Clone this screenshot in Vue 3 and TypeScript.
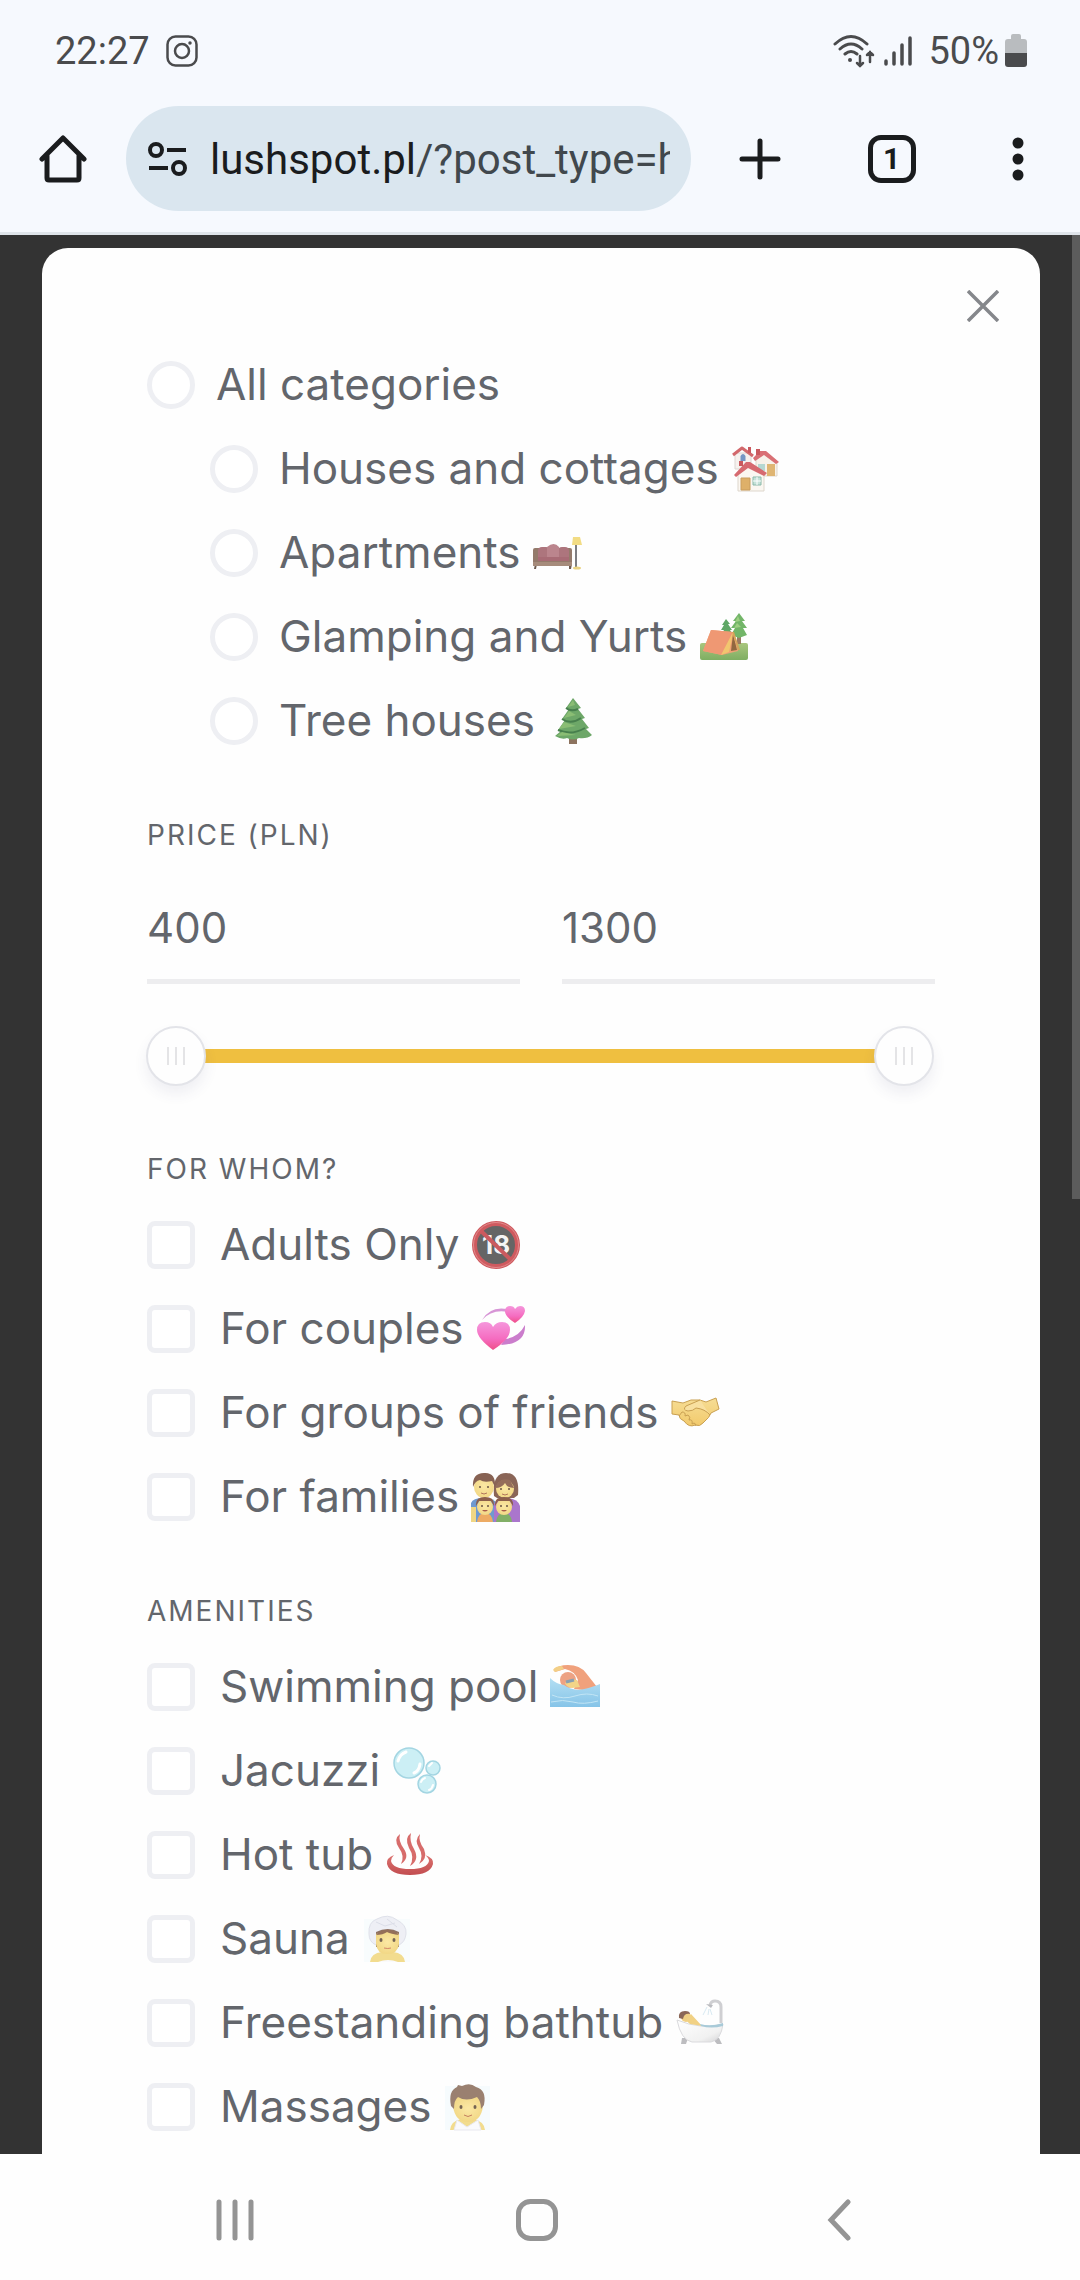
<script setup lang="ts">
import { ref } from 'vue'

interface Option {
  id: string
  label: string
  icon?: string
}

const categories: Option[] = [
  { id: 'all', label: 'All categories' },
  { id: 'houses', label: 'Houses and cottages', icon: 'e-houses' },
  { id: 'apartments', label: 'Apartments', icon: 'e-sofa' },
  { id: 'glamping', label: 'Glamping and Yurts', icon: 'e-camping' },
  { id: 'treehouses', label: 'Tree houses', icon: 'e-tree' },
]

const audiences: Option[] = [
  { id: 'adults', label: 'Adults Only' },
  { id: 'couples', label: 'For couples', icon: 'e-hearts' },
  { id: 'friends', label: 'For groups of friends', icon: 'e-handshake' },
  { id: 'families', label: 'For families', icon: 'e-family' },
]

const amenities: Option[] = [
  { id: 'pool', label: 'Swimming pool', icon: 'e-swim' },
  { id: 'jacuzzi', label: 'Jacuzzi', icon: 'e-bubbles' },
  { id: 'hottub', label: 'Hot tub', icon: 'e-hot' },
  { id: 'sauna', label: 'Sauna', icon: 'e-sauna' },
  { id: 'bathtub', label: 'Freestanding bathtub', icon: 'e-bath' },
  { id: 'massages', label: 'Massages', icon: 'e-massage' },
]

const category = ref('')
const audience = ref<string[]>([])
const amenity = ref<string[]>([])
const minPrice = ref(400)
const maxPrice = ref(1300)
</script>

<template>
  <div class="screen">
    <svg class="sprite" aria-hidden="true">
      <defs>
        <linearGradient id="g-grass" x1="0" y1="0" x2="0" y2="1">
          <stop offset="0" stop-color="#a9c67e" />
          <stop offset="1" stop-color="#7fae62" />
        </linearGradient>
        <linearGradient id="g-heart" x1="0" y1="0" x2="0" y2="1">
          <stop offset="0" stop-color="#f597dc" />
          <stop offset="0.6" stop-color="#f56cc0" />
          <stop offset="1" stop-color="#ef4f88" />
        </linearGradient>
        <linearGradient id="g-water" x1="0" y1="0" x2="0" y2="1">
          <stop offset="0" stop-color="#b4dff3" />
          <stop offset="1" stop-color="#86c4e8" />
        </linearGradient>
        <radialGradient id="g-face" cx="0.5" cy="0.45" r="0.6">
          <stop offset="0" stop-color="#fbe8a4" />
          <stop offset="1" stop-color="#f1d683" />
        </radialGradient>
        <linearGradient id="g-red" x1="0" y1="0" x2="0" y2="1">
          <stop offset="0" stop-color="#dc7370" />
          <stop offset="1" stop-color="#c24d50" />
        </linearGradient>
        <linearGradient id="g-tub" x1="0" y1="0" x2="1" y2="1">
          <stop offset="0" stop-color="#ffffff" />
          <stop offset="0.7" stop-color="#f1f1f1" />
          <stop offset="1" stop-color="#d2d2d4" />
        </linearGradient>
        <linearGradient id="g-hand" x1="0" y1="0" x2="0" y2="1">
          <stop offset="0" stop-color="#f6dd95" />
          <stop offset="1" stop-color="#f2ca6c" />
        </linearGradient>
      </defs>

      <symbol id="e-houses" viewBox="0 0 50 50">
        <path d="M4 9h16v16H4z" fill="#f6f1ee" stroke="#dcd6d2" />
        <path d="M2 11 11 4l11 8" fill="none" stroke="#d2686c" stroke-width="3" stroke-linejoin="round" />
        <path d="M17 3h3v6h-3z" fill="#c9595e" />
        <path d="M9.500 17v-5q2.500-4 5 0v5z" fill="#7596c4" />
        <path d="M25 16 34 9l12 8v15H25z" fill="#f7f2ea" stroke="#ddd6cc" />
        <path d="M22 14 29 7h6l13 11-3 2-12-9-9 6z" fill="#d97075" />
        <path d="M25 5h4v6h-4z" fill="#c9595e" />
        <path d="M27 20h7v7h-7z" fill="#b5d8d2" />
        <path d="M36 20h8v12h-8z" fill="#dfb573" />
        <path d="M7 30 17 21l16 9v17H7z" fill="#fbf7f1" stroke="#ddd6cc" />
        <path d="M3 31 15 18h4l17 11-3 3-16-8-12 9z" fill="#d66a70" />
        <path d="M8 17h4v5H8z" fill="#c9595e" />
        <path d="M10 34h9v12h-9z" fill="#deb069" stroke="#c99d5f" />
        <path d="M22 33h8v8h-8z" fill="#c5e2d8" stroke="#8bb9aa" />
        <path d="M26 33v8M22 37h8" stroke="#fff" />
      </symbol>

      <symbol id="e-sofa" viewBox="0 0 50 50">
        <path d="M3 36h2l-1 5H2zM37 36h3l-1 5h-2z" fill="#6d5b50" />
        <rect x="1" y="20" width="39" height="18" rx="2" fill="#947a6b" />
        <rect x="6" y="19" width="12" height="14" rx="4" fill="#ad757d" />
        <rect x="26" y="19" width="11" height="14" rx="4" fill="#ad757d" />
        <path d="M15 31V19q7-6 12 0v12z" fill="#bb858d" />
        <path d="M6 29h31v4H6z" fill="#a86b75" />
        <path d="M1 34h39v4H1z" fill="#a68b7b" />
        <path d="M44 16v23" stroke="#7d7e82" stroke-width="2" />
        <path d="M41 9h7l2 8H40z" fill="#f2dc84" />
        <ellipse cx="45" cy="40" rx="4" ry="1.500" fill="#ead383" />
      </symbol>

      <symbol id="e-camping" viewBox="0 0 50 50">
        <rect x="1" y="31" width="48" height="17" rx="2" fill="url(#g-grass)" />
        <path d="M38 20h4v12h-4zM26 17h3v10h-3z" fill="#9a7b62" />
        <path d="m40 1-6 8h3l-5 7h4l-4 7 8 3 8-3-4-7h4l-5-7h3z" fill="#72b568" />
        <path d="m27 7-4 6h2l-3 5h3l-3 5h12l-3-5h2l-4-6h2z" fill="#5fa766" />
        <path d="m39 4-3 6 5-1zM38 11l-3 5 7-1z" fill="#9ccf82" />
        <path d="m12 18 22 2 5 19-16 4-19-4z" fill="#efa176" />
        <path d="m12 18-8 21 19 4L34 20z" fill="#ef9873" />
        <path d="M34 20 22 43l8-3 4-18 6 16z" fill="#f2c56f" />
        <path d="m34 22-2 17 6-1z" fill="#91683f" />
        <path d="m34 20 6 18" stroke="#d6a35b" stroke-width="2" />
      </symbol>

      <symbol id="e-tree" viewBox="0 0 50 50">
        <path d="M22 38h8v10h-8z" fill="#8d735f" />
        <path d="M26 2 19 12l3 1-7 10 3 1-7 10 3 1-6 5q7 4 12 2 6 3 12 0 8 1 13-3l-6-6 3-1-7-9 3-1-7-9 3-1z" fill="#6da768" />
        <path d="M19 12q5 4 12 1M15 23q9 6 19-1M11 34q13 6 27-2" fill="none" stroke="#477f4d" stroke-width="2" />
        <path d="m26 4-5 7 7-2zM22 15l-5 7 12-3zM17 26l-5 7 17-3zM15 36l-5 4 19-1z" fill="#8abd74" />
      </symbol>

      <symbol id="e-hearts" viewBox="0 0 50 50">
        <path d="M6 16Q14 2 31 5l1 3Q16 5 6 16z" fill="#d795d6" />
        <path d="M49 21Q50 40 25 41l4-6Q43 33 49 21z" fill="#cb7dcc" />
        <path d="M17 46Q1 34 1 26 1 18 9 18q6 0 8 5 3-5 9-5 8 0 8 8 0 9-17 20z" fill="url(#g-heart)" />
        <path d="M39 19Q28 12 29 6q1-4 5-4 4 0 5 3 2-3 5-3 5 0 5 5-1 6-10 12z" fill="url(#g-heart)" />
      </symbol>

      <symbol id="e-handshake" viewBox="0 0 50 50">
        <path d="m2 13 11 2 8-3h9l6 2 10-4 3 11-8 4q-1 4-8 10-3 4-8 2-6 3-11-4-5-2-5-6l-7-1z" fill="url(#g-hand)" stroke="#c9a052" stroke-linejoin="round" />
        <path d="M30 12 16 18q-4 4 2 5 5 0 8-3 9 1 14 7" fill="#f8e0a0" stroke="#c9a052" />
        <path d="m9 28 3-4q4 0 3 4l3-1q3 2 1 5 4-1 3 4l2-1q3 1 1 3" fill="none" stroke="#c9a052" />
      </symbol>

      <symbol id="e-family" viewBox="0 0 50 50">
        <path d="M0 50V31q2-5 12-5 12 0 14 6v18z" fill="#6f9ad0" />
        <path d="M23 50V32q3-6 13-6 11 1 13 8v16z" fill="#aa76cc" />
        <path d="M0 35h5v15H0z" fill="#f0d684" />
        <path d="M23 24Q21 1 35 1q14 0 12 22l-4 3H26z" fill="#8a6557" />
        <ellipse cx="34" cy="17" rx="9" ry="9" fill="url(#g-face)" />
        <path d="M24 16Q28 5 39 8l4 8Q36 16 34 11q-3 5-10 5z" fill="#946d5b" />
        <ellipse cx="13" cy="15" rx="10" ry="11" fill="url(#g-face)" />
        <path d="M2 15Q1 1 13 1q12-1 11 14l-3-6q-8 2-12-1-5 1-7 7z" fill="#876253" />
        <path d="M6 50q1-9 8-9t8 9z" fill="#edab64" />
        <path d="M25 50q1-9 8-9t8 9z" fill="#82af67" />
        <ellipse cx="14" cy="35" rx="8" ry="8" fill="url(#g-face)" />
        <ellipse cx="33" cy="35" rx="8" ry="8" fill="url(#g-face)" />
        <path d="M5 34q-1-9 9-9 10 0 9 9l-3-5H8zM24 34q-1-9 9-9 10 0 9 9l-3-5H27z" fill="#8c5f4b" />
        <path d="M11 38q3 3 6 0zM30 38q3 3 6 0z" fill="#a95c4a" />
        <g fill="#6b5446">
          <circle cx="9" cy="15" r="1" /><circle cx="17" cy="15" r="1" /><circle cx="30" cy="17" r="1" /><circle cx="38" cy="17" r="1" />
          <circle cx="11" cy="34" r="1" /><circle cx="17" cy="34" r="1" /><circle cx="30" cy="34" r="1" /><circle cx="36" cy="34" r="1" />
        </g>
        <path d="M10 21q3 2 6 0M31 22q3 2 6 0" fill="none" stroke="#b0755a" />
      </symbol>

      <symbol id="e-swim" viewBox="0 0 50 50">
        <path d="M4 8Q8 3 18 3q12 0 18 8l11 14-14 3-9-1 4-9Q25 9 15 7L5 10z" fill="#f0a17c" />
        <path d="M3 8q2-4 9-4l2 3-9 3z" fill="#f3cf87" />
        <circle cx="18" cy="18" r="8" fill="#eda283" />
        <path d="M15 21q6-5 12-3l3 7-8 1q-6-1-7-5z" fill="#f3d587" />
        <path d="m16 20 8-2" stroke="#8aa0b0" stroke-width="3" />
        <path d="M0 16q6 6 14 7 5 4 14 5 10-1 22-6v23H0z" fill="url(#g-water)" />
        <path d="M2 33q11 5 23 1t23 0M1 40q12-3 22 0t25-1" fill="none" stroke="#c2e5f5" />
      </symbol>

      <symbol id="e-bubbles" viewBox="0 0 50 50">
        <g fill="#cceff5" stroke="#a3d5e2" stroke-width="1.500">
          <circle cx="17" cy="17" r="15" /><circle cx="41" cy="22" r="7" /><circle cx="35" cy="38" r="9" />
        </g>
        <g fill="none" stroke="#fff" stroke-linecap="round">
          <path d="M6 15q2-7 8-9" stroke-width="3" /><path d="M28 18q-1 7-6 9" stroke-width="3" />
          <path d="M37 20l3-3M29 36q1-3 4-4M41 39q-1 4-4 5" stroke-width="2" />
        </g>
      </symbol>

      <symbol id="e-hot" viewBox="0 0 50 50">
        <path d="M9 25Q1 28 2 34q3 11 23 11t23-11q1-6-8-9 4 3 4 6-2 8-19 8T6 31q0-3 3-6z" fill="url(#g-red)" />
        <g fill="#d76c6b">
          <path d="M15 4q-7 5-1 14 6 8 2 16 9-6 3-15-6-8-4-15z" />
          <path d="M26 3q-7 5-2 15 6 9 1 18 10-6 4-17-5-8-3-16z" />
          <path d="M35 4q-6 6-1 14 5 8 0 16 9-5 5-15-6-8-4-15z" />
        </g>
      </symbol>

      <symbol id="e-sauna" viewBox="0 0 50 50">
        <path d="M2 5h46v43H2z" fill="#eaf8fd" opacity="0.300" />
        <path d="M8 48q1-9 12-10h11q11 1 12 10z" fill="#f2dc8f" />
        <path d="M16 48q10-4 20 0z" fill="#fafafc" />
        <path d="M7 20Q6 8 15 5q11-6 20 1 10 5 9 14-1 8-7 11H14Q7 28 7 20z" fill="#eeeff5" stroke="#dfe1ea" />
        <path d="M14 33V18q12-6 23 0v15z" fill="#8f7262" />
        <path d="M14 20q11-4 23 0v10q-1 10-12 10-10 0-11-10z" fill="url(#g-face)" />
        <path d="M14 21q4-5 11-5t12 5q-8-1-12-3-4 3-11 3z" fill="#946f59" />
        <g fill="#746352"><ellipse cx="19" cy="26" rx="1.500" ry="2" /><ellipse cx="32" cy="26" rx="1.500" ry="2" /></g>
        <path d="M22 34q4 1 7 0" fill="none" stroke="#d28668" />
        <path d="m14 8 9 4 10-3M25 5l10 8" fill="none" stroke="#dcdee8" />
      </symbol>

      <symbol id="e-bath" viewBox="0 0 50 50">
        <path d="M46 25V9q0-6-6-6-4 0-5 4" fill="none" stroke="#cfcfd2" stroke-width="3" />
        <path d="m31 6 7 1-2 3z" fill="#bbbcc0" />
        <path d="m32 9-4 8m6-6-1 6m2-6 2 6" stroke="#d9eaf2" />
        <path d="M7 40h6l-2 6H6zM37 40h7l3 6h-5z" fill="#bdbdc0" />
        <path d="M2 22q24 10 46 4-2 16-12 18H17Q6 42 2 22z" fill="url(#g-tub)" stroke="#dadadd" />
        <circle cx="11" cy="19" r="5" fill="#f0cf83" />
        <path d="M4 20q-1-7 6-7 5 0 5 3-6-1-7 5z" fill="#8b6757" />
        <path d="m16 16 11 12-12-2q-5-4-3-5z" fill="#f1d184" />
        <path d="M25 26q11 3 23-1v3q-12 3-22 0z" fill="#a8cad8" />
      </symbol>

      <symbol id="e-massage" viewBox="0 0 50 50">
        <path d="M2 4h45v44H2z" fill="#e5f6fb" opacity="0.300" />
        <path d="M7 48q1-9 11-11h12q11 2 12 11z" fill="#f2dc8e" />
        <path d="m14 38 10 7 11-7 3 10H11z" fill="#fafafc" stroke="#e8e8ef" />
        <path d="M10 24v-9h30v9q-2 16-15 16T10 24z" fill="url(#g-face)" />
        <path d="M8 24Q5 9 14 5l1-2 4 1q8-4 14 1 11 3 8 18l-3 4q0-8-4-12-11 5-19 0-4 3-4 12z" fill="#9a8070" />
        <g fill="#746352"><ellipse cx="18" cy="25" rx="1.500" ry="2" /><ellipse cx="32" cy="25" rx="1.500" ry="2" /></g>
        <path d="M21 33q4 3 8 0" fill="none" stroke="#c47e60" />
      </symbol>
    </svg>

    <header class="chrome">
      <div class="status">
        <span>22:27</span>
        <svg class="insta" width="32" height="32" viewBox="0 0 32 32" fill="none" stroke="#4a4b4d" stroke-width="2.500" aria-label="Instagram">
          <rect x="1.500" y="1.500" width="29" height="29" rx="8" /><circle cx="16" cy="16" r="7" /><circle cx="24" cy="8" r="1" fill="#4a4b4d" stroke-width="1.500" />
        </svg>
        <svg class="wifi" width="42" height="34" viewBox="0 0 42 34" fill="none" stroke="#4a4b4d" stroke-width="3" stroke-linecap="round" aria-label="Wi-Fi">
          <path d="M2 10Q18-5 34 10M7 15Q18 5 29 15M12 20q6-5 12 0" />
          <circle cx="17" cy="26" r="2" fill="#4a4b4d" stroke="none" />
          <path d="M27 22v10m-3-3 3 3 3-3M37 28V18m-3 3 3-3 3 3" stroke-width="2.500" />
        </svg>
        <svg class="signal" width="28" height="30" viewBox="0 0 28 30" stroke="#4a4b4d" stroke-width="3.500" stroke-linecap="round" aria-label="Signal">
          <path d="M2 25v3M10 17v11M18 9v19M26 2v26" />
        </svg>
        <span>50%</span>
        <svg class="battery" width="22" height="34" viewBox="0 0 22 34" aria-hidden="true">
          <path d="M6 2q0-2 2-2h6q2 0 2 2v3h3q3 0 3 3v11H0V8q0-3 3-3h3z" fill="#b9bcbf" />
          <path d="M0 19h22v11q0 3-3 3H3q-3 0-3-3z" fill="#4a4b4d" />
        </svg>
      </div>
      <div class="toolbar">
        <button type="button" aria-label="Home">
          <svg width="48" height="48" viewBox="0 0 48 48" fill="none" stroke="#1a1c1e" stroke-width="5" stroke-linejoin="round" stroke-linecap="round">
            <path d="M3 24 24 3l21 21M8 20v23q0 2 2 2h28q2 0 2-2V20" />
          </svg>
        </button>
        <button type="button" class="address" aria-label="Address">
          <svg width="39" height="34" viewBox="0 0 39 34" fill="none" stroke="#1a1c1e" stroke-width="4">
            <circle cx="8" cy="8" r="6" /><path d="M19 8h19M1 26h19" /><circle cx="31" cy="26" r="6" />
          </svg>
          <span class="url">lushspot.pl<span class="path">/?post_type=h</span></span>
        </button>
        <button type="button" aria-label="New tab">
          <svg width="42" height="42" viewBox="0 0 42 42" stroke="#1a1c1e" stroke-width="5" stroke-linecap="round"><path d="M21 3v36M3 21h36" /></svg>
        </button>
        <button type="button" aria-label="Open tabs"><span class="tabs">1</span></button>
        <button type="button" aria-label="Menu">
          <svg width="12" height="44" viewBox="0 0 12 44" fill="#1a1c1e"><circle cx="6" cy="6" r="5.500" /><circle cx="6" cy="22" r="5.500" /><circle cx="6" cy="38" r="5.500" /></svg>
        </button>
      </div>
    </header>

    <main class="page">
      <form class="modal" @submit.prevent>
        <div class="top">
          <button type="button" class="close" aria-label="Close">
            <svg width="32" height="32" viewBox="0 0 32 32" stroke="#85878b" stroke-width="3.500"><path d="m1 1 30 30M31 1 1 31" /></svg>
          </button>
        </div>

        <div class="body">
          <div role="radiogroup" aria-label="Categories">
            <label v-for="(o, i) in categories" :key="o.id" class="row" :class="{ child: i > 0 }">
              <input v-model="category" type="radio" name="category" :value="o.id">
              <span>{{ o.label }}</span>
              <svg v-if="o.icon" class="emoji" aria-hidden="true"><use :href="'#' + o.icon" /></svg>
            </label>
          </div>

          <h2>Price (PLN)</h2>
          <div class="prices">
            <input v-model.number="minPrice" type="text" inputmode="numeric" aria-label="Minimum price">
            <input v-model.number="maxPrice" type="text" inputmode="numeric" aria-label="Maximum price">
          </div>
          <div class="slider">
            <input v-model.number="minPrice" type="range" min="400" max="1300" aria-label="Minimum price">
            <input v-model.number="maxPrice" type="range" min="400" max="1300" aria-label="Maximum price">
          </div>

          <h2 class="after-slider">For whom?</h2>
          <div class="checks">
            <label v-for="o in audiences" :key="o.id" class="row">
              <input v-model="audience" type="checkbox" :value="o.id">
              <span>{{ o.label }}</span>
              <svg v-if="o.icon" class="emoji" aria-hidden="true"><use :href="'#' + o.icon" /></svg>
              <svg v-else class="emoji" viewBox="0 0 50 50" aria-hidden="true">
                <circle cx="25" cy="25" r="22" fill="#656565" />
                <text x="25" y="34" text-anchor="middle" font-weight="700" font-size="26" fill="#f4f4f4">18</text>
                <path d="m10 11 30 29" stroke="#cb5a5f" stroke-width="4" />
                <circle cx="25" cy="25" r="21.500" fill="none" stroke="#cf5a5f" stroke-width="5" />
                <circle cx="25" cy="25" r="22.500" fill="none" stroke="#e28a8c" stroke-width="1" />
              </svg>
            </label>
          </div>

          <h2>Amenities</h2>
          <div class="checks">
            <label v-for="o in amenities" :key="o.id" class="row">
              <input v-model="amenity" type="checkbox" :value="o.id">
              <span>{{ o.label }}</span>
              <svg class="emoji" aria-hidden="true"><use :href="'#' + o.icon" /></svg>
            </label>
          </div>
        </div>
      </form>
      <div class="scrollbar"></div>
    </main>

    <nav class="system" aria-label="System">
      <button type="button" aria-label="Recent apps">
        <svg width="38" height="42" viewBox="0 0 38 42" stroke="#949494" stroke-width="5" stroke-linecap="round"><path d="M3 3v36M19 3v36M35 3v36" /></svg>
      </button>
      <button type="button" aria-label="Home screen">
        <svg width="42" height="42" viewBox="0 0 42 42" fill="none" stroke="#949494" stroke-width="5"><rect x="2.500" y="2.500" width="37" height="37" rx="12" /></svg>
      </button>
      <button type="button" aria-label="Back">
        <svg width="24" height="42" viewBox="0 0 24 42" fill="none" stroke="#949494" stroke-width="5" stroke-linecap="round"><path d="M21 3 4 21l17 18" /></svg>
      </button>
    </nav>
  </div>
</template>

<style>
body {
  margin: 0;
  background: #fefefe;
}
</style>

<style scoped>
.screen {
  display: flex;
  flex-direction: column;
  min-height: 100vh;
  font-family: Inter, sans-serif;
  color: #63666c;
}
.screen *,
.screen {
  box-sizing: border-box;
}
.sprite {
  position: absolute;
  width: 0;
  height: 0;
}
svg {
  flex: none;
  display: block;
}
button {
  display: flex;
  align-items: center;
  justify-content: center;
  padding: 0;
  border: 0;
  background: none;
  color: inherit;
  font: inherit;
}
.chrome {
  background: #f6f9fe;
  border-bottom: 3px solid #dfe4ea;
  font-family: Roboto, sans-serif;
}
.status {
  display: flex;
  align-items: center;
  height: 85px;
  padding: 16px 53px 0 55px;
  font-size: 38px;
  color: #4a4b4d;
}
.insta {
  margin-left: 16px;
}
.wifi {
  margin-left: auto;
}
.signal {
  margin: 0 16px 0 9px;
}
.battery {
  margin-left: 6px;
}
.toolbar {
  display: grid;
  grid-template-columns: 126px minmax(0, 1fr) 137px 127px 125px;
  align-items: center;
  height: 147px;
}
.address {
  justify-content: flex-start;
  gap: 23px;
  height: 105px;
  padding: 0 21px 0 22px;
  border-radius: 53px;
  background: #dae6ef;
}
.url {
  flex: 1;
  overflow: hidden;
  padding-top: 2px;
  white-space: nowrap;
  text-align: left;
  font-size: 42px;
  line-height: 60px;
  color: #1a1c1e;
}
.path {
  color: #41484d;
}
.tabs {
  display: flex;
  align-items: center;
  justify-content: center;
  width: 48px;
  height: 48px;
  border: 5px solid #1a1c1e;
  border-radius: 13px;
  font-size: 30px;
  font-weight: 700;
  color: #1a1c1e;
}
.page {
  position: relative;
  flex: 1;
  display: flex;
  padding: 13px 40px 0 42px;
  background: #333333;
}
.modal {
  flex: 1;
  min-width: 0;
  padding-bottom: 4px;
  border-radius: 26px 26px 0 0;
  background: #fefefe;
}
.top {
  display: flex;
  justify-content: flex-end;
  padding: 26px 26px 6px;
}
.close {
  width: 63px;
  height: 63px;
}
.body {
  padding: 0 105px;
}
.row {
  display: flex;
  align-items: center;
  height: 84px;
  font-size: 44px;
  white-space: nowrap;
}
.row span {
  padding-bottom: 2px;
}
.child {
  padding-left: 63px;
}
.row input {
  flex: none;
  appearance: none;
  width: 48px;
  height: 48px;
  margin: 0 21px 0 0;
  border: 5px solid #eeeff3;
  border-radius: 50%;
  background: #fff;
}
.checks .row input {
  margin-right: 25px;
  border-radius: 8px;
}
.row input:checked {
  background: #efbf40;
}
.emoji {
  width: 50px;
  height: 50px;
  margin-left: 12px;
}
h2 {
  margin: 51px 0 13px;
  font-size: 28px;
  line-height: 42px;
  font-weight: 400;
  letter-spacing: 2px;
  text-transform: uppercase;
}
.after-slider {
  margin-top: 62px;
}
.prices {
  display: grid;
  grid-template-columns: 1fr 1fr;
  gap: 42px;
  margin-top: 21px;
}
.prices input {
  width: 100%;
  height: 107px;
  padding: 0 0 2px;
  border: 0;
  border-bottom: 5px solid #ededef;
  border-radius: 0;
  outline: 0;
  background: none;
  color: inherit;
  font: inherit;
  font-size: 42px;
}
.slider {
  display: grid;
  margin: 42px 1px 0 -1px;
  background: linear-gradient(#efbf40, #efbf40) center / calc(100% - 30px) 14px no-repeat;
}
.slider input {
  grid-area: 1 / 1;
  appearance: none;
  width: 100%;
  height: 60px;
  margin: 0;
  background: none;
  pointer-events: none;
}
.slider input::-webkit-slider-thumb {
  appearance: none;
  width: 60px;
  height: 60px;
  border: 2px solid #e3e4e9;
  border-radius: 50%;
  background:
    linear-gradient(#e4e4e6, #e4e4e6) 19px center / 2px 18px no-repeat,
    linear-gradient(#e4e4e6, #e4e4e6) 27px center / 2px 18px no-repeat,
    linear-gradient(#e4e4e6, #e4e4e6) 35px center / 2px 18px no-repeat,
    #fefefe;
  box-shadow: 0 8px 14px rgba(60, 70, 110, 0.08);
  pointer-events: auto;
}
.scrollbar {
  position: absolute;
  top: 0;
  right: 0;
  width: 8px;
  height: 964px;
  background: #5c5c5c;
}
.system {
  display: grid;
  grid-template-columns: repeat(3, 1fr);
  align-items: center;
  height: 126px;
  padding: 6px 90px 0 84px;
  background: #fefefe;
}
</style>
